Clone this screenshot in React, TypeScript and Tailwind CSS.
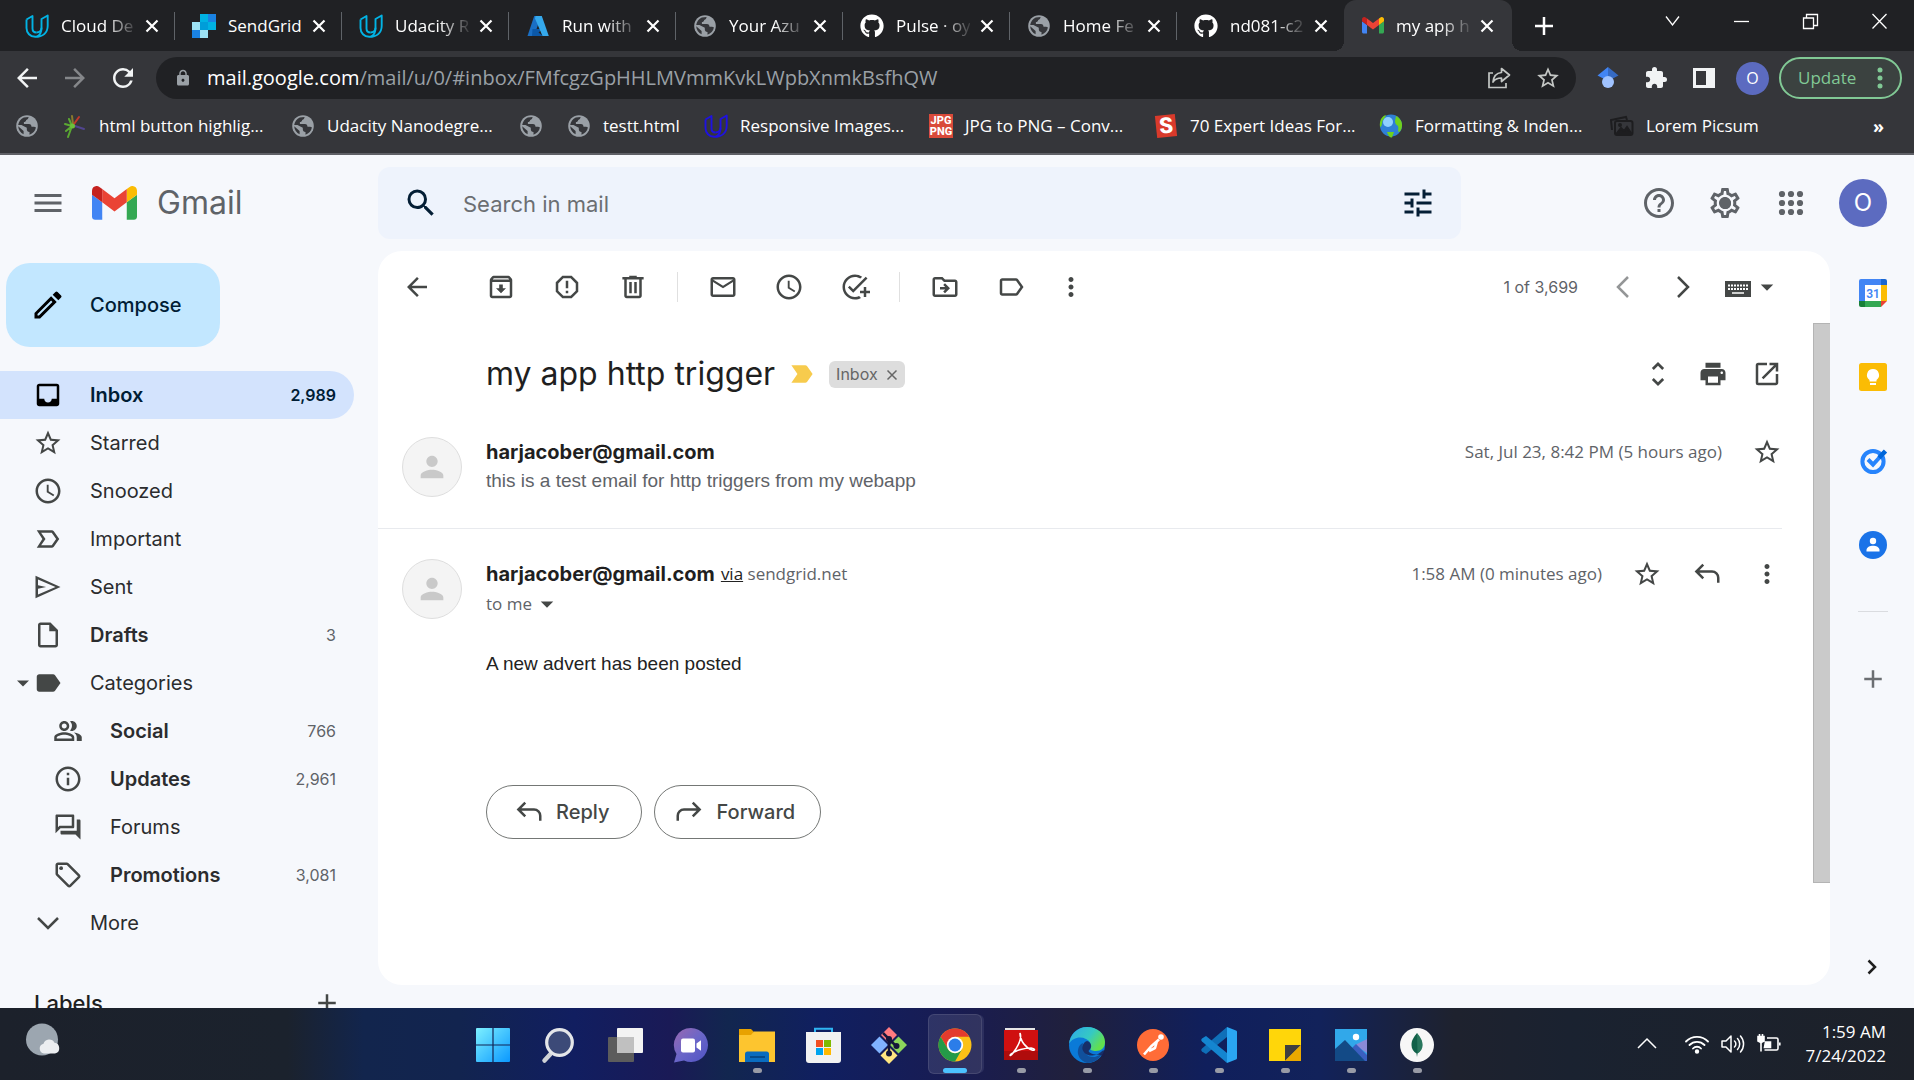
import type { ReactNode } from "react";
import type { IconType } from "react-icons";
import {
  MdMenu, MdInbox, MdStarBorder, MdAccessTime, MdLabelImportantOutline, MdOutlineInsertDriveFile, MdLabel,
  MdOutlinePeopleAlt, MdInfoOutline, MdOutlineForum, MdOutlineLocalOffer, MdAdd, MdArrowBack,
  MdArrowForward, MdOutlineArchive, MdReportGmailerrorred, MdMailOutline, MdOutlineAddTask, MdOutlineDriveFileMove,
  MdLabelOutline, MdMoreVert, MdArrowDropDown, MdUnfoldMore, MdPrint, MdOpenInNew, MdPerson, MdHelpOutline,
  MdOutlineSettings, MdTune, MdSearch, MdOutlineModeEdit, MdLock, MdRefresh, MdExtension, MdLabelImportant,
} from "react-icons/md";
import { FaGithub } from "react-icons/fa";

const chromeFont = "font-['Open_Sans','Noto_Sans',sans-serif]";
const gmailFont = "font-['Inter','Roboto',sans-serif]";
const detailFont = "font-['Open_Sans','Roboto',sans-serif]";
const arialFont = "font-['Liberation_Sans',Arial,sans-serif]";

/* ---------- small glyphs ---------- */

function Globe() {
  return (
    <svg viewBox="0 0 24 24" className="size-6 shrink-0">
      <circle cx="12" cy="12" r="10.8" fill="#9aa0a6" />
      <path
        d="M3.2 11c.4-3.400 2.600-6.300 5.600-7.600l4.800-.3c-.2 1.500-1 2.600-2.400 2.900-.3 1.500-1 2-2.300 2.100v2h5c1.800 0 2.600 1.200 2.600 2.700h2.400c1 0 1.600.3 2 .8-.6 3.300-3.100 6.200-6.400 7.100v-2.800c-1.800 0-2.700-1-2.700-2.600v-1.500L6.500 11z"
        fill="#35363a"
      />
      <path d="M3.200 12.200 8.600 17v3.200c-3.100-1.300-5.300-4.400-5.400-8z" fill="#35363a" />
    </svg>
  );
}

function Udacity({ color }: { color: string }) {
  return (
    <svg viewBox="0 0 24 24" className="size-6 shrink-0" fill="none" stroke={color} strokeWidth="1.9" strokeLinejoin="round">
      <path d="M1.500 5.500 7.500 2v12.500c0 2.500 1.500 4 4 4" />
      <path d="M1.500 5.500V14c0 5 3.700 8.800 8.700 8.800 7.500 0 12.500-4 12.500-11V1.500L16.500 5v9c0 3.500-1.400 7.500-5 8.700" />
      <path d="M11.500 18.500c3 0 5-1.700 5-4.700" />
    </svg>
  );
}

function GmailMark({ className }: { className: string }) {
  return (
    <svg viewBox="52 42 88 66" className={className}>
      <path fill="#4285f4" d="M58 108h14V74L52 59v43c0 3.320 2.690 6 6 6" />
      <path fill="#34a853" d="M120 108h14c3.320 0 6-2.690 6-6V59l-20 15" />
      <path fill="#fbbc04" d="M120 48v26l20-15v-8c0-7.420-8.470-11.650-14.400-7.200" />
      <path fill="#ea4335" d="M72 74V48l24 18 24-18v26L96 92" />
      <path fill="#c5221f" d="M52 51v8l20 15V48l-5.600-4.200c-5.940-4.450-14.400-.22-14.400 7.200" />
    </svg>
  );
}

function SendGridMark() {
  return (
    <svg viewBox="0 0 24 24" className="size-6 shrink-0">
      <path fill="#9de1f3" d="M0 8h8v8H0zM8 16h8v8H8z" />
      <path fill="#1a82e2" d="M0 16h8v8H0zM16 0h8v8h-8z" />
      <path fill="#00b2e3" d="M8 0h8v8H8zM16 8h8v8h-8z" />
      <path fill="#009dd9" d="M8 8h8v8H8z" />
    </svg>
  );
}

function AzureMark() {
  return (
    <svg viewBox="0 0 24 24" className="size-6 shrink-0">
      <path fill="#1a6fc4" d="M8.200 2h7L8 22H1.500z" />
      <path fill="#0b58a8" d="M6.500 15h10l-4 3.500L17 22H6z" />
      <path fill="#35a9ec" d="M9.500 2h6.300l7 20h-6.300L9 4.500z" />
    </svg>
  );
}

function CloseX({ className = "size-4" }: { className?: string }) {
  return (
    <svg viewBox="0 0 16 16" className={className} stroke="currentColor" strokeWidth="2.200" fill="none">
      <path d="M2.500 2.500l11 11M13.500 2.500l-11 11" />
    </svg>
  );
}

function SendIcon({ className }: { className?: string }) {
  return (
    <svg viewBox="0 0 24 24" className={className} fill="currentColor" fillRule="evenodd">
      <path d="M2 21V3l20 9zM4 18l14-6L4 6v4.600l6.500 1.400L4 13.400z" />
    </svg>
  );
}

function TrashIcon({ className }: { className?: string }) {
  return (
    <svg viewBox="0 0 24 24" className={className} fill="currentColor" fillRule="evenodd">
      <path d="M15 4V3H9v1H3.500v2H5v13c0 1.100.9 2 2 2h10c1.100 0 2-.9 2-2V6h1.500V4zM7 6h10v13H7zM9 8h2v9H9zM13 8h2v9h-2z" />
    </svg>
  );
}

function ChevronDown({ className }: { className?: string }) {
  return (
    <svg viewBox="0 0 24 24" className={className} fill="none" stroke="currentColor" strokeWidth="2">
      <path d="M4 8l8 8 8-8" />
    </svg>
  );
}

function ReplyIcon({ className }: { className?: string }) {
  return (
    <svg viewBox="0 0 24 24" className={className} fill="none" stroke="currentColor" strokeWidth="2">
      <path d="M9 4.500 3.500 10 9 15.500M3.500 10H16c2.800 0 5 2.200 5 5v4" />
    </svg>
  );
}

function ForwardIcon({ className }: { className?: string }) {
  return (
    <svg viewBox="0 0 24 24" className={className} fill="none" stroke="currentColor" strokeWidth="2">
      <path d="M15 4.500 20.500 10 15 15.500M20.500 10H8c-2.800 0-5 2.200-5 5v4" />
    </svg>
  );
}

/* ---------- browser chrome ---------- */

const tabs: { label: string; icon: ReactNode; fade?: boolean }[] = [
  { label: "Cloud De", icon: <Udacity color="#02b3e4" />, fade: true },
  { label: "SendGrid", icon: <SendGridMark /> },
  { label: "Udacity R", icon: <Udacity color="#02b3e4" />, fade: true },
  { label: "Run with", icon: <AzureMark />, fade: true },
  { label: "Your Azu", icon: <Globe />, fade: true },
  { label: "Pulse · oy", icon: <FaGithub className="size-6 shrink-0 text-white" />, fade: true },
  { label: "Home Fe", icon: <Globe />, fade: true },
  { label: "nd081-c2", icon: <FaGithub className="size-6 shrink-0 text-white" />, fade: true },
];

const fadeMask = "[mask-image:linear-gradient(to_right,black_60%,transparent_105%)]";

function TabStrip() {
  return (
    <div className="flex h-[51px] bg-[#202124] pl-2 text-[17px] text-white">
      {tabs.map((t, i) => (
        <div key={t.label + i} className="flex w-[167px] items-center pl-[17px]">
          {t.icon}
          <span className={`ml-3 w-[74px] whitespace-nowrap ${t.fade ? fadeMask : ""}`}>{t.label}</span>
          <button aria-label={`Close ${t.label}`} className="ml-[9px] flex size-4 items-center justify-center">
            <CloseX />
          </button>
          {i < tabs.length - 1 && <span className="ml-auto h-7 w-px bg-[#5f6368]" />}
        </div>
      ))}
      <div className="relative flex w-[168px] items-center rounded-t-xl bg-[#35363a] pl-[18px]">
        <span className="absolute bottom-0 -left-2.5 size-2.5 bg-[radial-gradient(circle_at_0_0,#202124_10px,#35363a_10px)]" />
        <span className="absolute -right-2.5 bottom-0 size-2.5 bg-[radial-gradient(circle_at_100%_0,#202124_10px,#35363a_10px)]" />
        <GmailMark className="w-[22px] shrink-0" />
        <span className={`ml-3 w-[74px] whitespace-nowrap ${fadeMask}`}>my app h</span>
        <button aria-label="Close my app" className="ml-[9px] flex size-4 items-center justify-center">
          <CloseX />
        </button>
      </div>
      <button aria-label="New tab" className="ml-4 flex w-8 items-center justify-center">
        <svg viewBox="0 0 18 18" className="size-[18px]" stroke="white" strokeWidth="2.500">
          <path d="M9 0v18M0 9h18" />
        </svg>
      </button>
      <div className="ml-auto flex h-[43px]">
        {[
          ["Search tabs", "M5 6.500l6.500 8.500L18 6.500"],
          ["Minimize", "M4 11.500h15"],
          ["Restore", "M4.500 8h10v10.500h-10zM7.500 8V4.500h11v11h-4"],
          ["Close window", "M4.500 4l14 14.500M18.500 4l-14 14.500"],
        ].map(([label, d]) => (
          <button key={label} aria-label={label} className="flex w-[69px] items-center justify-center">
            <svg viewBox="0 0 23 23" className="size-[23px]" fill="none" stroke="white" strokeWidth="1.300">
              <path d={d} />
            </svg>
          </button>
        ))}
      </div>
    </div>
  );
}

function Toolbar() {
  return (
    <div className="flex h-[54px] items-center bg-[#35363a] pr-3">
      <button aria-label="Back" className="ml-3 flex size-[30px] items-center justify-center text-[#f1f3f4]">
        <MdArrowBack className="size-[30px]" />
      </button>
      <button aria-label="Forward" className="ml-[18px] flex size-[30px] items-center justify-center text-[#85878a]">
        <MdArrowForward className="size-[30px]" />
      </button>
      <button aria-label="Reload" className="ml-[18px] flex size-[30px] items-center justify-center text-[#f1f3f4]">
        <MdRefresh className="size-[30px]" />
      </button>
      <div className="ml-[18px] flex h-[42px] min-w-0 flex-1 items-center rounded-full bg-[#202124] pr-[15px] pl-[18px]">
        <MdLock className="size-[18px] shrink-0 text-[#9aa0a6]" />
        <div role="textbox" aria-label="Address bar" className="ml-[15px] min-w-0 flex-1 truncate text-[20px] text-[#9aa0a6]">
          <span className="text-white">mail.google.com</span>/mail/u/0/#inbox/FMfcgzGpHHLMVmmKvkLWpbXnmkBsfhQW
        </div>
        <button aria-label="Share" className="flex size-6 items-center justify-center text-[#c4c7c5]">
          <svg viewBox="0 0 24 24" className="size-6" fill="none" stroke="currentColor" strokeWidth="1.700">
            <path d="M6 7H2v14.500h17V17" />
            <path d="M14.500 2.500 22.500 9l-8 6.500V12c-4 0-6.500 1-8.500 4 .5-5.500 3.500-9 8.500-9.500z" strokeLinejoin="round" />
          </svg>
        </button>
        <button aria-label="Bookmark this page" className="ml-6 flex size-[26px] items-center justify-center text-[#c4c7c5]">
          <MdStarBorder className="size-[26px]" />
        </button>
      </div>
      <div className="ml-5 flex items-center gap-6">
        <button aria-label="Scholar" className="flex size-6 items-center justify-center">
          <svg viewBox="0 0 24 24" className="size-6">
            <path fill="#4285f4" d="M12 1 1.500 9.500 12 15z" />
            <path fill="#356ac3" d="M12 1l10.500 8.500L12 15z" />
            <circle cx="12" cy="16" r="6" fill="#a0c3ff" />
          </svg>
        </button>
        <button aria-label="Extensions" className="flex size-6 items-center justify-center text-[#f1f3f4]">
          <MdExtension className="size-6" />
        </button>
        <button aria-label="Side panel" className="flex size-6 items-center justify-center">
          <svg viewBox="0 0 24 24" className="size-6">
            <path fill="#f1f3f4" fillRule="evenodd" d="M1 2h22v20H1zM4 5v14h10V5z" />
          </svg>
        </button>
      </div>
      <button aria-label="Profile" className="ml-5 flex size-[33px] items-center justify-center rounded-full bg-[#5c6bc0] text-base text-white">
        O
      </button>
      <button className="ml-2.5 flex h-[42px] w-[123px] items-center justify-between rounded-full border-2 border-[#81c995] bg-[#3b4240] px-[17px] text-[17px] text-[#81c995]">
        Update
        <svg viewBox="0 0 6 24" className="h-6 w-1.5" fill="currentColor">
          <circle cx="3" cy="4" r="2.500" />
          <circle cx="3" cy="12" r="2.500" />
          <circle cx="3" cy="20" r="2.500" />
        </svg>
      </button>
    </div>
  );
}

const bookmarks: { label: string; width: string; icon: ReactNode }[] = [
  { label: "", width: "w-12", icon: <Globe /> },
  {
    label: "html button highlig...",
    width: "w-[228px]",
    icon: (
      <svg viewBox="0 0 24 24" className="size-6 shrink-0" fill="none" strokeWidth="2" strokeLinecap="round">
        <path stroke="#8a7a2c" d="M10 10 9 2" />
        <path stroke="#c0392b" d="M11 10l5-7" />
        <path stroke="#51458f" d="M12 12l9 3" />
        <path stroke="#5aa832" d="M9 12 2 10M9 12l-6 5M9 12 5 23M9 12 6 5" />
        <circle cx="9.500" cy="12" r="2.500" fill="#6cc03a" />
      </svg>
    ),
  },
  { label: "Udacity Nanodegre...", width: "w-[228px]", icon: <Globe /> },
  { label: "", width: "w-12", icon: <Globe /> },
  { label: "testt.html", width: "w-[137px]", icon: <Globe /> },
  { label: "Responsive Images...", width: "w-[225px]", icon: <Udacity color="#1f12e0" /> },
  {
    label: "JPG to PNG – Conv...",
    width: "w-[225px]",
    icon: (
      <span className="flex size-6 shrink-0 flex-col items-center justify-center bg-[#d94a3a] font-['Roboto',sans-serif] text-[11px] leading-[11px] font-extrabold text-white">
        <span>JPG</span>
        <span>PNG</span>
      </span>
    ),
  },
  {
    label: "70 Expert Ideas For...",
    width: "w-[225px]",
    icon: (
      <span className="flex size-6 shrink-0 items-center justify-center">
        <span className="flex h-[22px] w-5 -rotate-6 items-center justify-center bg-[#d93a2b] font-['Roboto',sans-serif] text-[22px] leading-none font-black text-white">
          S
        </span>
      </span>
    ),
  },
  {
    label: "Formatting & Inden...",
    width: "w-[231px]",
    icon: (
      <svg viewBox="0 0 24 24" className="size-6 shrink-0">
        <circle cx="12" cy="11.500" r="11" fill="#2f7fd6" />
        <circle cx="9" cy="8" r="5" fill="#8fd0ff" />
        <path fill="#6fd11c" d="M2 5c1.500-2.500 3-3.500 5-4-1 3-3 4-3.500 6S3 13 1 13c-.4-3 0-6 1-8zM17 2c4 2 6.500 6 6 10s-2 6-3.500 6c-1-2 .5-4-.5-6-2-1-3-3-3-5zM8 18h7l-2 5.500c-2 .5-4-2-5-5.500z" />
      </svg>
    ),
  },
  {
    label: "Lorem Picsum",
    width: "w-[160px]",
    icon: (
      <svg viewBox="0 0 24 24" className="size-6 shrink-0" fill="none" stroke="#1d1d1f" strokeWidth="2">
        <path d="M2 16 1 6l15-3 1 3" />
        <rect x="5" y="7" width="17.500" height="14" rx="2" />
        <path fill="#1d1d1f" d="M7 19l4-5 3 3 3-4 4 6z" />
        <circle cx="10" cy="11" r="1" />
      </svg>
    ),
  },
];

function BookmarksBar() {
  return (
    <nav aria-label="Bookmarks" className="flex h-[50px] items-center border-b-2 border-[#5f6066] bg-[#35363a] pr-6 pb-1.5 pl-[15px] text-[17px] text-white">
      {bookmarks.map((b, i) => (
        <a key={i} href="#bookmark" aria-label={b.label || "Bookmark"} className={`flex shrink-0 items-center gap-3 whitespace-nowrap ${b.width}`}>
          {b.icon}
          {b.label && <span>{b.label}</span>}
        </a>
      ))}
      <button aria-label="More bookmarks" className="mr-1.5 ml-auto text-lg leading-none font-bold">
        »
      </button>
    </nav>
  );
}

/* ---------- Gmail ---------- */

function IconButton({ label, children, className = "" }: { label: string; children: ReactNode; className?: string }) {
  return (
    <button aria-label={label} className={`flex shrink-0 items-center justify-center ${className}`}>
      {children}
    </button>
  );
}

function GmailHeader() {
  return (
    <header className="flex h-24 shrink-0 items-center">
      <div className="flex w-[378px] shrink-0 items-center">
        <IconButton label="Main menu" className="ml-[30px] text-[#5f6368]">
          <MdMenu className="size-9" />
        </IconButton>
        <a href="#inbox" className="ml-[26px] flex items-center gap-5 text-[32px] leading-none text-[#5f6368]">
          <GmailMark className="w-[45px]" />
          Gmail
        </a>
      </div>
      <label className="flex h-[72px] max-w-[1083px] flex-1 items-center rounded-xl bg-[#eef3fc] px-[25px] text-[#041e35]">
        <MdSearch className="size-9 shrink-0" />
        <input
          aria-label="Search in mail"
          placeholder="Search in mail"
          className="ml-6 h-9 min-w-0 flex-1 bg-transparent pt-0.5 text-[22px] text-[#444746] outline-none placeholder:text-[#6b6e72]"
        />
        <IconButton label="Show search options">
          <MdTune className="size-9" />
        </IconButton>
      </label>
      <div className="mr-[27px] ml-auto flex items-center gap-[30px] text-[#5f6368]">
        <IconButton label="Support">
          <MdHelpOutline className="size-9" />
        </IconButton>
        <IconButton label="Settings">
          <span className="grid size-9 place-items-center">
            <MdOutlineSettings className="col-start-1 row-start-1 size-9" />
            <span className="col-start-1 row-start-1 size-[11px] rounded-full bg-[#5f6368]" />
          </span>
        </IconButton>
        <IconButton label="Google apps">
          <svg viewBox="0 0 36 36" className="size-9" fill="currentColor">
            {[9, 18, 27].map((y) => [9, 18, 27].map((x) => <circle key={`${x}-${y}`} cx={x} cy={y} r="3.100" />))}
          </svg>
        </IconButton>
        <IconButton label="Account" className="size-12 rounded-full bg-[#5c6bc0] text-[24px] text-white">
          O
        </IconButton>
      </div>
    </header>
  );
}

type Folder = { label: string; icon: IconType | ((p: { className?: string }) => ReactNode); count?: string; bold?: boolean; sub?: boolean; active?: boolean; caret?: boolean };

const folders: Folder[] = [
  { label: "Inbox", icon: MdInbox, count: "2,989", bold: true, active: true },
  { label: "Starred", icon: MdStarBorder },
  { label: "Snoozed", icon: MdAccessTime },
  { label: "Important", icon: MdLabelImportantOutline },
  { label: "Sent", icon: SendIcon },
  { label: "Drafts", icon: MdOutlineInsertDriveFile, count: "3", bold: true },
  { label: "Categories", icon: MdLabel, caret: true },
  { label: "Social", icon: MdOutlinePeopleAlt, count: "766", bold: true, sub: true },
  { label: "Updates", icon: MdInfoOutline, count: "2,961", bold: true, sub: true },
  { label: "Forums", icon: MdOutlineForum, sub: true },
  { label: "Promotions", icon: MdOutlineLocalOffer, count: "3,081", bold: true, sub: true },
  { label: "More", icon: ChevronDown },
];

function Sidebar() {
  return (
    <aside className="w-[378px] shrink-0 overflow-hidden pt-3">
      <button className="ml-1.5 flex h-[84px] w-[214px] items-center rounded-3xl bg-[#c2e7ff] pl-6 text-[20px] font-medium text-[#001d35]">
        <MdOutlineModeEdit className="size-9 text-black" />
        <span className="ml-6">Compose</span>
      </button>
      <nav aria-label="Folders" className="mt-6 flex flex-col">
        {folders.map((f) => {
          const Icon = f.icon;
          return (
            <a
              key={f.label}
              href={`#${f.label.toLowerCase()}`}
              className={`flex h-12 w-[354px] items-center rounded-r-full pr-[18px] text-[20px] ${f.sub ? "pl-[53px]" : f.caret ? "pl-[13px]" : "pl-[33px]"} ${
                f.active ? "bg-[#d3e3fd] text-[#001d35]" : "text-[#2b2c2e]"
              }`}
            >
              {f.caret && (
                <svg viewBox="0 0 20 20" className="size-5 text-[#444746]" fill="currentColor">
                  <path d="M4 7.500h12L10 13.500z" />
                </svg>
              )}
              <Icon className={`size-[30px] shrink-0 ${f.active ? "text-black" : "text-[#444746]"}`} />
              <span className={`ml-[27px] ${f.bold ? "font-semibold" : ""}`}>{f.label}</span>
              {f.count && (
                <span className={`ml-auto text-base ${f.active ? "font-semibold" : "text-[#5f6368]"}`}>{f.count}</span>
              )}
            </a>
          );
        })}
      </nav>
      <div className="mt-8 flex h-12 items-center pr-9 pl-[34px] text-[#1f1f1f]">
        <h2 className="text-[22px] font-medium">Labels</h2>
        <IconButton label="Create new label" className="ml-auto">
          <MdAdd className="size-[30px] text-[#444746]" />
        </IconButton>
      </div>
    </aside>
  );
}

function ThreadToolbar() {
  const icon = "size-[30px]";
  const divider = "h-[30px] w-px bg-[#e0e0e0]";
  return (
    <div className="flex h-[72px] shrink-0 items-center pr-12 pl-6 text-[#444746]">
      <IconButton label="Back to inbox">
        <MdArrowBack className={icon} />
      </IconButton>
      <div className="ml-[54px] flex items-center gap-9">
        <IconButton label="Archive">
          <MdOutlineArchive className={icon} />
        </IconButton>
        <IconButton label="Report spam">
          <MdReportGmailerrorred className={icon} />
        </IconButton>
        <IconButton label="Delete">
          <TrashIcon className={icon} />
        </IconButton>
      </div>
      <span className={`ml-[29px] ${divider}`} />
      <div className="ml-[30px] flex items-center gap-9">
        <IconButton label="Mark as unread">
          <MdMailOutline className={icon} />
        </IconButton>
        <IconButton label="Snooze">
          <MdAccessTime className={icon} />
        </IconButton>
        <IconButton label="Add to tasks">
          <MdOutlineAddTask className={icon} />
        </IconButton>
      </div>
      <span className={`ml-[29px] ${divider}`} />
      <div className="ml-[30px] flex items-center">
        <IconButton label="Move to">
          <MdOutlineDriveFileMove className={icon} />
        </IconButton>
        <IconButton label="Labels" className="ml-9">
          <MdLabelOutline className={icon} />
        </IconButton>
        <IconButton label="More" className="ml-[30px]">
          <MdMoreVert className={icon} />
        </IconButton>
      </div>
      <span className="ml-auto text-base text-[#5f6368]">1 of 3,699</span>
      <div className="ml-[30px] flex items-center gap-[30px]">
        <IconButton label="Newer" className="text-[#949697]">
          <ChevronDown className="size-[30px] rotate-90" />
        </IconButton>
        <IconButton label="Older">
          <ChevronDown className="size-[30px] -rotate-90" />
        </IconButton>
      </div>
      <button aria-label="Input tools" className="ml-[27px] flex items-center gap-[1px]">
        <svg viewBox="0 0 26 16" className="mt-1 h-4 w-[26px]">
          <rect width="26" height="16" fill="#444746" />
          <path d="M3 4.500h20M3 8h20" stroke="white" strokeWidth="2" strokeDasharray="2 1" />
          <path d="M7 12h12" stroke="white" strokeWidth="1.500" />
        </svg>
        <MdArrowDropDown className="size-[30px]" />
      </button>
    </div>
  );
}

function Avatar() {
  return (
    <span className="flex size-[60px] shrink-0 items-center justify-center rounded-full border border-[#dedede] bg-[#f4f4f4] text-[#c9c9c9]">
      <MdPerson className="size-[34px]" />
    </span>
  );
}

function Thread() {
  return (
    <div className="flex min-h-0 flex-1">
      <div className="min-w-0 flex-1 pr-[31px]">
        <div className="flex h-[102px] items-center pl-[108px] text-[#444746]">
          <h1 className="text-[32px] text-[#1f1f1f]">my app http trigger</h1>
          <MdLabelImportant className="ml-3 size-[30px] text-[#f7cb4d]" />
          <span className="ml-3 flex h-[27px] items-center gap-2 rounded-md bg-[#dddddd] px-[7px] text-base text-[#666666]">
            Inbox
            <button aria-label="Remove label Inbox">
              <svg viewBox="0 0 12 12" className="mt-0.5 size-3" stroke="currentColor" strokeWidth="1.500">
                <path d="M1.500 1.500l9 9M10.500 1.500l-9 9" />
              </svg>
            </button>
          </span>
          <div className="ml-auto flex items-center gap-6">
            <IconButton label="Expand all">
              <MdUnfoldMore className="size-8" />
            </IconButton>
            <IconButton label="Print all">
              <MdPrint className="size-[30px]" />
            </IconButton>
            <IconButton label="In new window">
              <MdOpenInNew className="size-[30px]" />
            </IconButton>
          </div>
        </div>

        <article className="flex h-[104px] items-start border-b border-[#e8eaee] pt-3 pl-6">
          <Avatar />
          <div className="ml-6 flex-1">
            <div className="flex h-[30px] items-center">
              <h3 className="text-[20px] font-bold text-[#1f1f1f]">harjacober@gmail.com</h3>
              <time className={`ml-auto text-[17px] text-[#5f6368] ${detailFont}`}>Sat, Jul 23, 8:42 PM (5 hours ago)</time>
              <IconButton label="Star" className="ml-[30px] text-[#444746]">
                <MdStarBorder className="size-[30px]" />
              </IconButton>
            </div>
            <p className={`text-[19px] leading-7 text-[#5f6368] ${arialFont}`}>this is a test email for http triggers from my webapp</p>
          </div>
        </article>

        <article className="flex items-start pt-[30px] pl-6">
          <Avatar />
          <div className="ml-6 flex-1">
            <div className="flex h-[30px] items-center">
              <h3 className="text-[20px] font-bold text-[#1f1f1f]">harjacober@gmail.com</h3>
              <span className={`ml-[6px] text-[17px] text-[#5f6368] ${detailFont}`}>
                <a href="#via" className="text-[#222222] underline">via</a> sendgrid.net
              </span>
              <time className={`ml-auto text-[17px] text-[#5f6368] ${detailFont}`}>1:58 AM (0 minutes ago)</time>
              <div className="ml-[30px] flex items-center gap-[30px] text-[#444746]">
                <IconButton label="Star">
                  <MdStarBorder className="size-[30px]" />
                </IconButton>
                <IconButton label="Reply">
                  <ReplyIcon className="size-[30px]" />
                </IconButton>
                <IconButton label="More options">
                  <MdMoreVert className="size-[30px]" />
                </IconButton>
              </div>
            </div>
            <button className={`flex h-[30px] items-center text-[17px] text-[#5f6368] ${detailFont}`}>
              to me
              <MdArrowDropDown className="size-[30px] text-[#444746]" />
            </button>
            <p className={`mt-[31px] text-[19px] leading-7 text-[#222222] ${arialFont}`}>A new advert has been posted</p>
            <div className="mt-[107px] flex gap-3 text-[20px] font-medium text-[#444746]">
              <button className="flex h-[54px] items-center gap-3 rounded-full border border-[#747775] pr-8 pl-[27px]">
                <ReplyIcon className="size-[30px]" />
                Reply
              </button>
              <button className="flex h-[54px] items-center gap-3 rounded-full border border-[#747775] pr-[25px] pl-[19px]">
                <ForwardIcon className="size-[30px]" />
                Forward
              </button>
            </div>
          </div>
        </article>
      </div>
      <div className="h-[560px] w-[17px] shrink-0 border-y border-l border-[#b4b4b4] bg-[#cacaca]" />
    </div>
  );
}

function SidePanel() {
  return (
    <aside className="flex w-[84px] shrink-0 flex-col items-center pt-7 pl-0.5">
      <div className="flex flex-col gap-14">
        <IconButton label="Calendar">
          <svg viewBox="0 0 28 28" className="size-7">
            <rect x="5" y="5" width="18" height="18" fill="white" />
            <path fill="#4285f4" d="M2 0h20v6H6v16H0V2a2 2 0 0 1 2-2z" />
            <path fill="#1967d2" d="M22 0h4a2 2 0 0 1 2 2v4h-6z" />
            <path fill="#fbbc04" d="M22 6h6v16h-6z" />
            <path fill="#34a853" d="M6 22h16v6H6z" />
            <path fill="#188038" d="M0 22h6v6H2a2 2 0 0 1-2-2z" />
            <path fill="#ea4335" d="M22 22h6l-6 6z" />
            <text x="14" y="18.500" textAnchor="middle" fontSize="12" fontWeight="600" fill="#4285f4" fontFamily="Roboto, sans-serif">31</text>
          </svg>
        </IconButton>
        <IconButton label="Keep">
          <svg viewBox="0 0 28 28" className="size-7">
            <rect width="28" height="28" rx="2.500" fill="#fbbc04" />
            <path fill="white" d="M14 6a6 6 0 0 0-3.500 10.900V18.500h7v-1.600A6 6 0 0 0 14 6zM11 20h6v2h-6z" />
          </svg>
        </IconButton>
        <IconButton label="Tasks">
          <svg viewBox="0 0 28 28" className="size-7" fill="none">
            <circle cx="14" cy="14.500" r="10.600" stroke="#2684fc" strokeWidth="4" />
            <path d="M9 12.500l5 5L25.500 5" stroke="#2684fc" strokeWidth="4" />
            <path d="M20 10.800 26.500 4" stroke="#0066da" strokeWidth="4.500" />
          </svg>
        </IconButton>
        <IconButton label="Contacts">
          <svg viewBox="0 0 28 28" className="size-7">
            <circle cx="14" cy="14" r="14" fill="#1a73e8" />
            <circle cx="14" cy="10" r="3.200" fill="white" />
            <path fill="white" d="M7.500 20.500V19c0-2.800 3.500-4.300 6.500-4.300s6.500 1.500 6.500 4.300v1.500z" />
          </svg>
        </IconButton>
      </div>
      <span className="mt-[52px] h-px w-[30px] bg-[#dadce0]" />
      <IconButton label="Get add-ons" className="mt-[52px]">
        <MdAdd className="size-[30px] text-[#6b6e72]" />
      </IconButton>
      <IconButton label="Hide side panel" className="mt-auto mb-8">
        <svg viewBox="0 0 18 18" className="size-[18px]" fill="none" stroke="#1f1f1f" strokeWidth="2.500">
          <path d="M4.500 2.500 11 9 4.500 15.500" />
        </svg>
      </IconButton>
    </aside>
  );
}

/* ---------- Windows taskbar ---------- */

const apps: { name: string; art: ReactNode; state?: "open" | "active" }[] = [
  {
    name: "Start",
    art: (
      <>
        <defs>
          <linearGradient id="win" x1="0" y1="0" x2="1" y2="1">
            <stop offset="0" stopColor="#7df0ff" />
            <stop offset="1" stopColor="#0a98ff" />
          </linearGradient>
        </defs>
        <path fill="url(#win)" d="M1 2a1 1 0 0 1 1-1h15.400v16.400H1zM18.600 1H34a1 1 0 0 1 1 1v15.400H18.600zM1 18.600h16.400V35H2a1 1 0 0 1-1-1zM18.600 18.600H35V34a1 1 0 0 1-1 1H18.600z" />
      </>
    ),
  },
  {
    name: "Search",
    art: (
      <>
        <path d="M9.500 27 3.500 33.500" stroke="#cfd2d6" strokeWidth="4.500" strokeLinecap="round" />
        <circle cx="18.500" cy="15.500" r="12.800" fill="#3c4a78" stroke="#e4e6e9" strokeWidth="3.200" />
      </>
    ),
  },
  {
    name: "Task view",
    art: (
      <>
        <rect x="10" y="1" width="26" height="25" rx="1" fill="#f3f3f3" />
        <rect x="1" y="10" width="26" height="25" rx="1" fill="#5c5c5c" />
        <path fill="#c0c0c0" d="M10 10h17v16H10z" />
      </>
    ),
  },
  {
    name: "Chat",
    art: (
      <>
        <defs>
          <linearGradient id="chat" x1="0" y1="0" x2="1" y2="1">
            <stop offset="0" stopColor="#9a68b0" />
            <stop offset=".5" stopColor="#6a66c8" />
            <stop offset="1" stopColor="#4f52c4" />
          </linearGradient>
        </defs>
        <path fill="url(#chat)" d="M18 1a17 17 0 1 1-7 32.500L1 35.500l2.500-8.500A17 17 0 0 1 18 1z" />
        <rect x="8" y="11.500" width="14" height="14" rx="2" fill="white" />
        <path fill="white" d="M23.500 16.500l4.500-3.300v10.600l-4.500-3.300z" />
      </>
    ),
  },
  {
    name: "File Explorer",
    state: "open",
    art: (
      <>
        <path fill="#e8a200" d="M0 2h12l3 3-2 4H0z" />
        <path fill="#fdc52f" d="M0 8h12l3-3.500h21V35H0z" />
        <path fill="#0a6cbf" d="M6 35V27a2.500 2.500 0 0 1 2.500-2.500h19A2.500 2.500 0 0 1 30 27v8z" />
        <path d="M11 30h15" stroke="#063f78" strokeWidth="1.500" />
      </>
    ),
  },
  {
    name: "Microsoft Store",
    art: (
      <>
        <path d="M10 7V1.800h17V7" fill="none" stroke="#2fb5f2" strokeWidth="2" />
        <path fill="#f2f2f2" d="M1 5h35v28a3 3 0 0 1-3 3H4a3 3 0 0 1-3-3z" />
        <path fill="#f25022" d="M11 13h7v7h-7z" />
        <path fill="#7fba00" d="M19 13h7v7h-7z" />
        <path fill="#00a4ef" d="M11 21h7v7h-7z" />
        <path fill="#ffb900" d="M19 21h7v7h-7z" />
      </>
    ),
  },
  {
    name: "Git Bash",
    art: (
      <>
        <path fill="#ff7a80" d="M18 0l8 8-8 8-8-8z" />
        <path fill="#80b3ff" d="M8.500 9.500l8.500 8.500-8.500 8.500L0 18z" />
        <path fill="#8cd65c" d="M27.500 9.500 36 18l-8.500 8.500L19 18z" />
        <path fill="#ffe680" d="M18 20l8.500 8.500L18 37l-8.500-8.500z" />
        <path d="M12 6l6 6v14M18 12l7 7" stroke="#14163a" strokeWidth="2.500" fill="none" />
        <circle cx="18" cy="12" r="3" fill="#14163a" />
        <circle cx="25.500" cy="19" r="3" fill="#14163a" />
        <circle cx="18" cy="26.500" r="3" fill="#14163a" />
      </>
    ),
  },
  {
    name: "Chrome",
    state: "active",
    art: (
      <>
        <circle cx="18" cy="18" r="16.500" fill="#fbc116" />
        <path fill="#e33b2e" d="M3.710 9.750A16.500 16.500 0 0 1 32.290 9.750H18L10.850 22.100z" />
        <path fill="#249a48" d="M3.710 9.750A16.500 16.500 0 0 0 18 34.500l7.150-12.400A8.250 8.250 0 0 1 10.850 22.100z" />
        <circle cx="18" cy="18" r="8.200" fill="white" />
        <circle cx="18" cy="18" r="6.400" fill="#2b7de9" />
      </>
    ),
  },
  {
    name: "Acrobat",
    state: "open",
    art: (
      <>
        <path fill="#e6e6e6" d="M2 1h30v4H2z" />
        <path fill="#d01010" d="M1 3h34v30H1z" />
        <path fill="#8f0808" d="M1 24h34v9H1z" opacity=".5" />
        <path
          d="M17 6c2 5-1 12-7 20-2 3-4 3-2 1 5-4 14-6 20-6 5 1 4 3 1 2-6-2-12-9-12-17z"
          fill="none"
          stroke="white"
          strokeWidth="1.600"
        />
      </>
    ),
  },
  {
    name: "Edge",
    state: "open",
    art: (
      <>
        <defs>
          <linearGradient id="edgeTop" x1="0" y1="0" x2="1" y2=".5">
            <stop offset="0" stopColor="#2fa8e8" />
            <stop offset=".6" stopColor="#35c9c4" />
            <stop offset="1" stopColor="#62e04e" />
          </linearGradient>
        </defs>
        <circle cx="18" cy="18" r="18" fill="#0a7ad8" />
        <path fill="#10509c" d="M14 16c-2 8 4 15 12 14l7-3c-3 5-8 9-15 9-7-2-10-8-9-13 .5-3 2-6 5-7z" />
        <path fill="url(#edgeTop)" d="M0 17C1 7 9 0 18 0c11 0 18 7 18 15 0 6-4 9-9 9-4 0-6-1-5.500-2.500C23 20 22 14 17 12 11 9 3 11 0 17z" />
        <path fill="#1a1d4c" d="M21.500 21.500C23 19 22 15 18 14c-3 1-5 4-4.500 8 .8 4 5 7 10 6.500 4-.3 7-2 11-5.500l1.500 4-2 4c0-2-1-2.500-3-3-3-.5-10-.5-11.500-4z" opacity=".8" />
      </>
    ),
  },
  {
    name: "Postman",
    state: "open",
    art: (
      <>
        <circle cx="18" cy="18" r="16" fill="#ff6c37" />
        <circle cx="26" cy="10" r="2.800" fill="white" />
        <path d="M24 12.500 16 19.500l-7 8M22 14l-2 7-6 3" stroke="white" strokeWidth="2.600" fill="none" strokeLinejoin="round" />
      </>
    ),
  },
  {
    name: "Visual Studio Code",
    state: "open",
    art: (
      <>
        <path fill="#0f6fb8" d="M26 0v10L5 27 1 24.500c-1-.8-1-2 0-3z" />
        <path fill="#1485d0" d="M26 36V26L5 9 1 11.500c-1 .8-1 2 0 3z" />
        <path fill="#2aa6f2" d="M26 0l9 3.500a1.500 1.500 0 0 1 1 1.500v26a1.500 1.500 0 0 1-1 1.500L26 36z" />
      </>
    ),
  },
  {
    name: "Sticky Notes",
    state: "open",
    art: (
      <>
        <path fill="#ffd60a" d="M2 2h32v32H2z" />
        <path fill="#3f3f3f" d="M18 18h16L18 34z" />
        <path fill="#eaa900" d="M34 18v16H18z" />
      </>
    ),
  },
  {
    name: "Photos",
    state: "open",
    art: (
      <>
        <path fill="#31a8ea" d="M2 2h32v32H2z" />
        <path fill="#8a8ad8" d="M34 12v14L22 18z" />
        <path fill="#3a5fc0" d="M18 22l5-5 11 11v6H20z" />
        <path fill="#134a86" d="M2 22 12 13l20 21H2z" />
        <circle cx="23" cy="10" r="3.200" fill="white" />
      </>
    ),
  },
  {
    name: "MongoDB Compass",
    state: "open",
    art: (
      <>
        <circle cx="18" cy="18" r="17" fill="#f7f7f7" />
        <path fill="#116149" d="M18 6c3 4 5.500 7 5.500 12 0 4-2 6.500-5 8.500L18 30l-.5-3.500c-3-2-5-4.500-5-8.500 0-5 2.500-8 5.500-12z" />
        <path fill="#3f8d72" d="M18 6c3 4 5.500 7 5.500 12 0 4-2 6.500-5 8.500z" opacity=".5" />
      </>
    ),
  },
];

function Taskbar() {
  return (
    <footer
      className={`grid h-[72px] shrink-0 grid-cols-[1fr_auto_1fr] items-stretch bg-[linear-gradient(to_right,#1c212b_0%,#1b222d_15%,#12254d_19%,#12244f_24%,#111e60_30%,#1a1a56_35%,#12264f_38%,#101f60_43%,#191c52_50%,#20203c_56%,#101f5c_63%,#12225a_69%,#1e222e_76%,#1a2230_82%,#1d2129_100%)] text-white ${chromeFont}`}
    >
      <div className="flex items-start pt-3.5 pl-6">
        <button aria-label="Weather">
          <svg viewBox="0 0 36 36" className="size-9">
            <circle cx="18" cy="17.500" r="16" fill="#9ca6b0" />
            <path fill="#eceef1" d="M20 31.500a5 5 0 0 1-.5-9.800 6 6 0 0 1 11-1 5.500 5.500 0 0 1 .5 10.800z" />
          </svg>
        </button>
      </div>
      <div className="flex pr-1">
        {apps.map((a) => (
          <button key={a.name} aria-label={a.name} className="flex w-[66px] justify-center py-1.5">
            <span
              className={`flex h-[60px] w-[54px] flex-col items-center pt-3 ${
                a.state === "active" ? "rounded-md border border-white/10 bg-white/10 shadow-[3px_0_0_-1px_#2c2f5e]" : "border border-transparent"
              }`}
            >
              <svg viewBox="0 0 36 36" className="size-9 overflow-visible">{a.art}</svg>
              {a.state && (
                <span className={`mt-[5px] h-[5px] shrink-0 rounded-full ${a.state === "active" ? "w-6 bg-[#4cc2ff]" : "w-[9px] bg-[#989ba6]"}`} />
              )}
            </span>
          </button>
        ))}
      </div>
      <div className="flex items-center justify-end pr-7">
        <button aria-label="Show hidden icons" className="mr-[26px]">
          <svg viewBox="0 0 24 24" className="size-6" fill="none" stroke="white" strokeWidth="1.500">
            <path d="M3 16l9-9 9 9" />
          </svg>
        </button>
        <button aria-label="Network, volume and battery" className="mr-6 flex gap-3">
          <svg viewBox="0 0 24 24" className="size-6" fill="none" stroke="white" strokeWidth="1.800" strokeLinecap="round">
            <path d="M1 9.500a15.500 15.500 0 0 1 22 0M4.500 13a10.500 10.500 0 0 1 15 0M8 16.500a5.500 5.500 0 0 1 8 0" />
            <circle cx="12" cy="19.500" r="1.300" fill="white" />
          </svg>
          <svg viewBox="0 0 24 24" className="size-6" fill="none" stroke="white" strokeWidth="1.500" strokeLinejoin="round" strokeLinecap="round">
            <path d="M1 9v6h4l5 5V4L5 9zM13.500 9a4 4 0 0 1 0 6M16.500 6.500a8 8 0 0 1 0 11M19.500 4a12 12 0 0 1 0 16" />
          </svg>
          <svg viewBox="0 0 24 24" className="size-6" fill="none" stroke="white" strokeWidth="1.600">
            <path d="M10 6h9.500a1.500 1.500 0 0 1 1.500 1.500v9a1.500 1.500 0 0 1-1.500 1.500H7.500M22.800 10.500v3" />
            <path fill="white" d="M1 4.500h6V9L4 10.500 1 9zM8.500 10h5v5.500h-6zM2.500 2v2M5.500 2v2" />
            <path d="M4 10v9.500" />
          </svg>
        </button>
        <div className="text-right text-[17px] leading-6">
          <div>1:59 AM</div>
          <div>7/24/2022</div>
        </div>
      </div>
    </footer>
  );
}

export default function App() {
  return (
    <div className="flex h-screen flex-col overflow-hidden bg-[#f6f8fc]">
      <div className={`shrink-0 ${chromeFont}`}>
        <TabStrip />
        <Toolbar />
        <BookmarksBar />
      </div>
      <div className={`flex min-h-0 flex-1 flex-col bg-[#f6f8fc] ${gmailFont}`}>
        <GmailHeader />
        <div className="flex min-h-0 flex-1">
          <Sidebar />
          <main className="mb-[23px] flex min-w-0 flex-1 flex-col overflow-hidden rounded-3xl bg-white">
            <ThreadToolbar />
            <Thread />
          </main>
          <SidePanel />
        </div>
      </div>
      <Taskbar />
    </div>
  );
}
